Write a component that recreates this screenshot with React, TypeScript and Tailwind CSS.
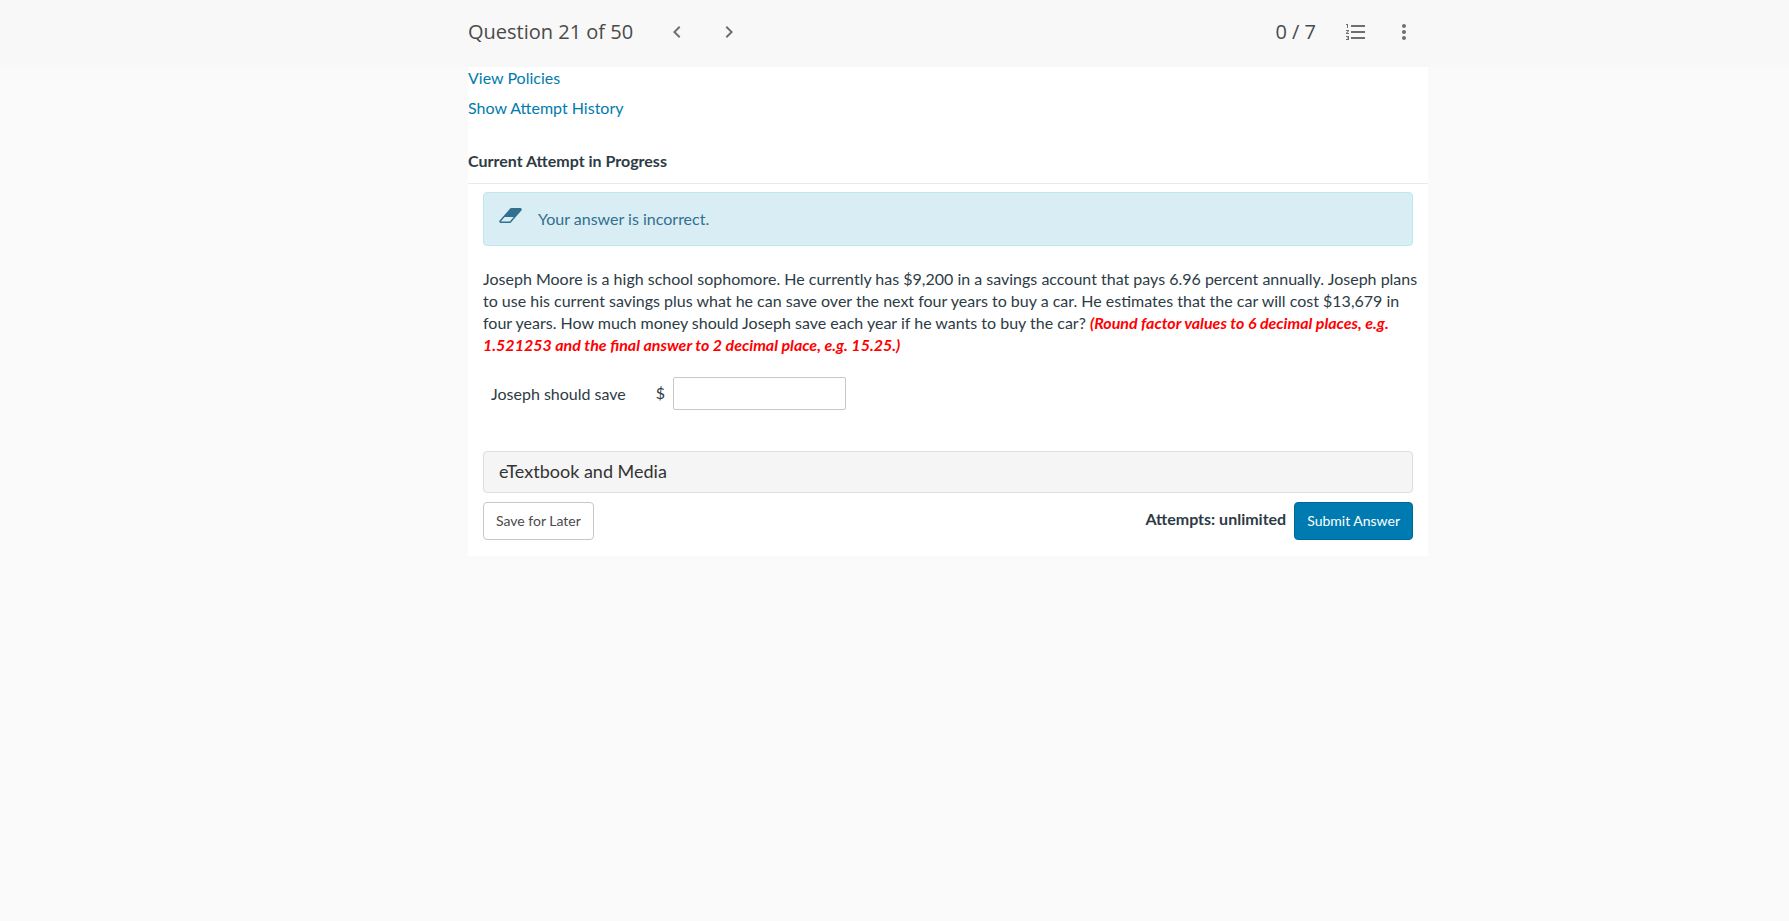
import { MdFormatListNumbered, MdMoreVert, MdNavigateBefore, MdNavigateNext } from "react-icons/md";

function EraserIcon() {
  return (
    <svg viewBox="0 256 1920 1280" fill="currentColor" className="h-[15px] w-[23px]" aria-hidden="true">
      <path d="M896 1408l336-384h-768l-336 384h768zM1909 331q15 34 9.5 71.5t-30.5 65.5l-896 1024q-38 44-96 44h-768q-38 0-69.5-20.5t-47.5-54.5q-15-34-9.5-71.5t30.5-65.5l896-1024q38-44 96-44h768q38 0 69.5 20.5t47.5 54.5z" />
    </svg>
  );
}

function Header() {
  return (
    <header className="bg-[#f8f8f8] pl-[107px] font-['Open_Sans',sans-serif] text-[#4a4a4a]">
      <div className="mx-auto flex h-[67px] max-w-[960px] items-center pb-1">
        <h1 className="text-xl">Question 21 of 50</h1>
        <nav className="ml-8 flex gap-7 text-2xl text-[#6f6f6f]">
          <button type="button" aria-label="Previous question">
            <MdNavigateBefore />
          </button>
          <button type="button" aria-label="Next question">
            <MdNavigateNext />
          </button>
        </nav>
        <div className="mr-3 ml-auto flex items-center gap-6 text-2xl text-[#6f6f6f]">
          <span className="mr-1 text-xl text-[#4a4a4a]">0 / 7</span>
          <button type="button" aria-label="Question list">
            <MdFormatListNumbered />
          </button>
          <button type="button" aria-label="More options">
            <MdMoreVert />
          </button>
        </div>
      </div>
    </header>
  );
}

export default function App() {
  return (
    <div className="min-h-screen bg-[#fafafa] font-['Lato',sans-serif] text-base leading-[22px] text-[#2d3b45]">
      <Header />
      <main className="pl-[107px]">
        <div className="mx-auto max-w-[960px] bg-white pb-4">
          <div className="flex flex-col items-start gap-2 text-[#007bac]">
            <a href="#policies">View Policies</a>
            <a href="#history">Show Attempt History</a>
          </div>
          <h2 className="mt-[31px] border-b border-[#eaeaea] pb-[11px] font-bold">Current Attempt in Progress</h2>

          <div className="px-[15px] pt-2">
            <div role="alert" className="flex h-[54px] rounded border border-[#bce8f1] bg-[#d9edf5] px-[15px] pt-[15px] text-[#31708f]">
              <EraserIcon />
              <p className="ml-4">Your answer is incorrect.</p>
            </div>

            <p className="mt-[22px] -mr-2">
              Joseph Moore is a high school sophomore. He currently has $9,200 in a savings account that pays 6.96
              percent annually. Joseph plans
              <br />
              to use his current savings plus what he can save over the next four years to buy a car. He estimates that
              the car will cost $13,679 in
              <br />
              four years. How much money should Joseph save each year if he wants to buy the car?{" "}
              <em className="font-bold text-[#ff0000]">
                (Round factor values to 6 decimal places, e.g.
                <br />
                1.521253 and the final answer to 2 decimal place, e.g. 15.25.)
              </em>
            </p>

            <div className="mt-[21px] flex items-center pl-2">
              <label htmlFor="answer">Joseph should save</label>
              <span className="ml-[30px] pb-0.5">$</span>
              <input
                id="answer"
                type="text"
                className="ml-2 h-[33px] w-[173px] rounded-xs border border-[#c7c7c7] bg-white px-2"
              />
            </div>

            <button
              type="button"
              className="mt-[41px] flex h-[42px] w-full items-center rounded-sm border border-[#dddddd] bg-[#f5f5f5] px-[15px] pb-0.5 text-lg text-[#333333]"
            >
              eTextbook and Media
            </button>

            <div className="mt-[9px] flex items-center">
              <button type="button" className="h-[38px] rounded border border-[#c7c7c7] bg-white px-3 text-sm text-[#4a4a4a]">
                Save for Later
              </button>
              <span className="mr-2 ml-auto pb-1 font-bold">Attempts: unlimited</span>
              <button type="button" className="h-[38px] rounded border border-[#006a96] bg-[#007bb2] px-3 text-sm text-white">
                Submit Answer
              </button>
            </div>
          </div>
        </div>
      </main>
    </div>
  );
}
